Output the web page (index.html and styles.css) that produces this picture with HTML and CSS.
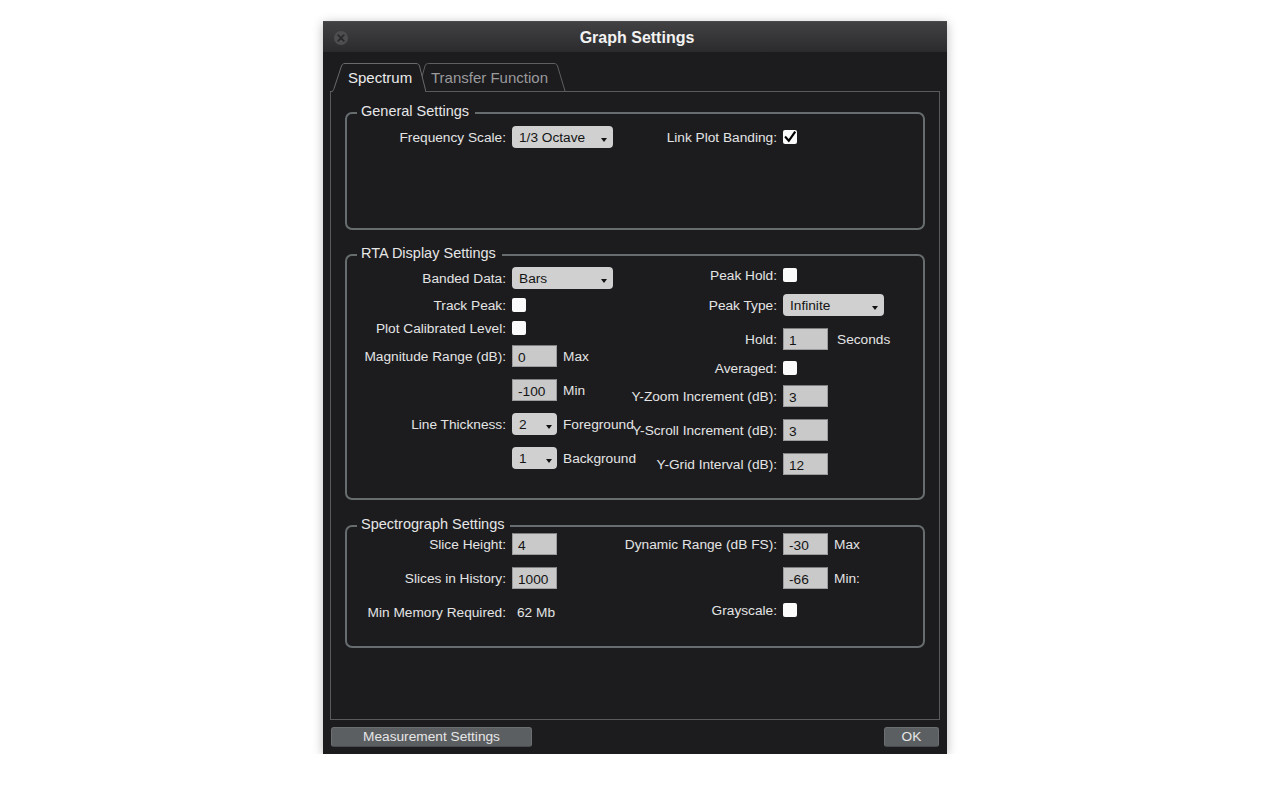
FILE: index.html
```html
<!DOCTYPE html>
<html>
<head>
<meta charset="utf-8">
<title>Graph Settings</title>
<link rel="stylesheet" href="styles.css">
</head>
<body>
<div class="window">
  <div class="titlebar">
    <span class="close"><svg width="16" height="16" viewBox="0 0 16 16"><circle cx="8" cy="8" r="7" fill="#4e4e50"/><path d="M5.2,5.2 L10.8,10.8 M10.8,5.2 L5.2,10.8" stroke="#2a2a2c" stroke-width="1.8" stroke-linecap="round"/></svg></span>
    <span class="title">Graph Settings</span>
  </div>
  <div class="body">
    <div class="tabs">
      <div class="tab tab-active">
        <svg class="tab-shape" viewBox="0 0 96 30" preserveAspectRatio="none"><path d="M0,30 C3,30 3.5,28 4,26.5 L11.5,4 C12,2.5 13,1.5 15,1.5 L86,1.5 C88,1.5 89,2.5 89.5,4 L96,30 Z" fill="#1c1c1f" stroke="none"/><path d="M0,30 C3,30 3.5,28 4,26.5 L11.5,4 C12,2.5 13,1.5 15,1.5 L86,1.5 C88,1.5 89,2.5 89.5,4 L96,30" fill="none" stroke="#6a6a6c" stroke-width="1"/></svg>
        <span class="tab-label">Spectrum</span>
      </div>
      <div class="tab tab-inactive">
        <svg class="tab-shape" viewBox="0 0 148 30" preserveAspectRatio="none"><path d="M0,29 L7,4 C7.5,2.5 8.5,1.5 10.5,1.5 L136,1.5 C138,1.5 139,2.5 139.5,4 L147,29" fill="#1c1c1f" stroke="#5f5f61" stroke-width="1"/></svg>
        <span class="tab-label">Transfer Function</span>
      </div>
    </div>
    <div class="panel">
      <fieldset class="group">
        <legend><span>General Settings</span></legend>
        <div class="cols h-general">
          <div class="col left gen-left">
            <div class="row"><div class="lbl">Frequency Scale:</div><div class="ctl"><div class="select wide"><span>1/3 Octave</span><i class="arrow"></i></div></div></div>
          </div>
          <div class="col right gen-right">
            <div class="row"><div class="lbl">Link Plot Banding:</div><div class="ctl"><span class="check on"><svg width="14" height="14" viewBox="0 0 14 14"><path d="M2.8,7.4 L5.8,10.8 L11.6,2.6" fill="none" stroke="#000" stroke-width="2.2" stroke-linecap="square"/></svg></span></div></div>
          </div>
        </div>
      </fieldset>

      <fieldset class="group gap-rta">
        <legend><span>RTA Display Settings</span></legend>
        <div class="cols h-rta">
          <div class="col left rta-left">
            <div class="row"><div class="lbl">Banded Data:</div><div class="ctl"><div class="select wide"><span>Bars</span><i class="arrow"></i></div></div></div>
            <div class="row"><div class="lbl">Track Peak:</div><div class="ctl"><span class="check"></span></div></div>
            <div class="row"><div class="lbl">Plot Calibrated Level:</div><div class="ctl"><span class="check"></span></div></div>
            <div class="row"><div class="lbl">Magnitude Range (dB):</div><div class="ctl"><span class="field">0</span><span class="suffix">Max</span></div></div>
            <div class="row"><div class="lbl"></div><div class="ctl"><span class="field">-100</span><span class="suffix">Min</span></div></div>
            <div class="row"><div class="lbl">Line Thickness:</div><div class="ctl"><div class="select narrow"><span>2</span><i class="arrow"></i></div><span class="suffix">Foreground</span></div></div>
            <div class="row"><div class="lbl"></div><div class="ctl"><div class="select narrow"><span>1</span><i class="arrow"></i></div><span class="suffix">Background</span></div></div>
          </div>
          <div class="col right rta-right">
            <div class="row"><div class="lbl">Peak Hold:</div><div class="ctl"><span class="check"></span></div></div>
            <div class="row"><div class="lbl">Peak Type:</div><div class="ctl"><div class="select wide"><span>Infinite</span><i class="arrow"></i></div></div></div>
            <div class="row"><div class="lbl">Hold:</div><div class="ctl"><span class="field">1</span><span class="suffix suffix-wide">Seconds</span></div></div>
            <div class="row"><div class="lbl">Averaged:</div><div class="ctl"><span class="check"></span></div></div>
            <div class="row"><div class="lbl">Y-Zoom Increment (dB):</div><div class="ctl"><span class="field">3</span></div></div>
            <div class="row"><div class="lbl">Y-Scroll Increment (dB):</div><div class="ctl"><span class="field">3</span></div></div>
            <div class="row"><div class="lbl">Y-Grid Interval (dB):</div><div class="ctl"><span class="field">12</span></div></div>
          </div>
        </div>
      </fieldset>

      <fieldset class="group gap-spec">
        <legend><span>Spectrograph Settings</span></legend>
        <div class="cols h-spec">
          <div class="col left spec-left">
            <div class="row"><div class="lbl">Slice Height:</div><div class="ctl"><span class="field">4</span></div></div>
            <div class="row"><div class="lbl">Slices in History:</div><div class="ctl"><span class="field">1000</span></div></div>
            <div class="row"><div class="lbl">Min Memory Required:</div><div class="ctl"><span class="value">62 Mb</span></div></div>
          </div>
          <div class="col right spec-right">
            <div class="row"><div class="lbl">Dynamic Range (dB FS):</div><div class="ctl"><span class="field">-30</span><span class="suffix">Max</span></div></div>
            <div class="row"><div class="lbl"></div><div class="ctl"><span class="field">-66</span><span class="suffix">Min:</span></div></div>
            <div class="row"><div class="lbl">Grayscale:</div><div class="ctl"><span class="check"></span></div></div>
          </div>
        </div>
      </fieldset>
    </div>
    <div class="buttons">
      <button class="btn btn-measure">Measurement Settings</button>
      <button class="btn btn-ok">OK</button>
    </div>
  </div>
</div>
</body>
</html>
```

FILE: styles.css
```css
html, body {
  margin: 0;
  padding: 0;
  background: #ffffff;
}

body {
  font-family: "Liberation Sans", Arial, Helvetica, sans-serif;
  font-size: 13.7px;
  color: #e4e4e4;
}

.window {
  width: 624px;
  height: 733px;
  margin: 21px auto 0;
  background: #1c1c1f;
  box-shadow: 0 2px 10px rgba(0, 0, 0, 0.28);
  display: flex;
  flex-direction: column;
}

.titlebar {
  height: 31px;
  flex: none;
  display: flex;
  align-items: center;
  justify-content: center;
  position: relative;
  background: linear-gradient(#414143, #2b2b2d);
  border-top: 1px solid #4a4a4c;
  box-sizing: border-box;
}

.close {
  position: absolute;
  left: 10px;
  top: 8px;
  width: 16px;
  height: 16px;
  display: block;
}

.close svg {
  display: block;
}

.title {
  font-size: 16px;
  font-weight: bold;
  color: #f2f2f2;
  padding-left: 4px;
  padding-top: 2px;
}

.body {
  flex: 1;
  padding: 10px 7px 7px 7px;
  display: flex;
  flex-direction: column;
}

.tabs {
  display: flex;
  height: 30px;
  margin-bottom: -1px;
  flex: none;
}

.tab {
  position: relative;
  height: 30px;
  display: flex;
  align-items: center;
  font-size: 15px;
}

.tab-shape {
  position: absolute;
  left: 0;
  top: 0;
  width: 100%;
  height: 100%;
  display: block;
}

.tab-label {
  position: relative;
  padding-top: 0;
}

.tab-active {
  width: 96px;
  padding-left: 18px;
  box-sizing: border-box;
  z-index: 2;
  color: #ebebeb;
}

.tab-inactive {
  width: 148px;
  margin-left: -8px;
  padding-left: 13px;
  box-sizing: border-box;
  z-index: 1;
  color: #9a9a9c;
}

.panel {
  width: 610px;
  height: 629px;
  box-sizing: border-box;
  border: 1px solid #5a5a5c;
  padding: 14px 14px 0 14px;
  flex: none;
}

.group {
  margin: 0;
  padding: 0;
  min-width: 0;
  width: 580px;
  box-sizing: border-box;
  border: 2px solid #676d6e;
  border-radius: 7px;
}

.group legend {
  margin-left: 10px;
  padding: 0 6px 0 4px;
  font-size: 14.5px;
  line-height: 14px;
  color: #e6e6e6;
}

.group legend span {
  position: relative;
  top: -2px;
}

.gap-rta {
  margin-top: 18px;
}

.gap-spec {
  margin-top: 19px;
}

.cols {
  display: flex;
}

.h-general { height: 108px; }
.h-rta { height: 236px; }
.h-spec { height: 113px; }

.col {
  display: grid;
  align-content: start;
  align-items: start;
}

.left {
  width: 280px;
}

.right {
  width: 290px;
}

.row {
  display: flex;
  align-items: center;
  height: 22px;
}

.lbl {
  display: flex;
  justify-content: flex-end;
  white-space: nowrap;
  margin-right: 6px;
  flex: none;
}

.left .lbl { width: 159px; }
.right .lbl { width: 150px; }

.ctl {
  display: flex;
  align-items: center;
  white-space: nowrap;
}

/* vertical rhythm of each column */
.gen-left { padding-top: 6px; grid-template-rows: 22px; }
.gen-right { padding-top: 6px; grid-template-rows: 22px; }
.rta-left { padding-top: 5px; grid-template-rows: 27px 23px 28px 34px 34px 34px 22px; }
.rta-right { padding-top: 2px; grid-template-rows: 30px 34px 29px 28px 34px 34px 22px; }
.spec-left { padding-top: 0; grid-template-rows: 34px 34px 22px; }
.spec-right { padding-top: 0; grid-template-rows: 34px 32px 22px; }

.select {
  height: 22px;
  box-sizing: border-box;
  background: #d0d0d1;
  border-radius: 4px;
  color: #141414;
  display: flex;
  align-items: center;
  justify-content: space-between;
  padding-left: 7px;
  padding-top: 1px;
}

.select.wide { width: 101px; padding-right: 6px; }
.select.narrow { width: 45px; padding-right: 5px; }

.arrow {
  display: block;
  width: 0;
  height: 0;
  border-left: 3.5px solid transparent;
  border-right: 3.5px solid transparent;
  border-top: 4px solid #111;
  margin-top: 5px;
}

.field {
  width: 45px;
  height: 22px;
  box-sizing: border-box;
  background: #c9c9ca;
  border: 1px solid #9c9c9e;
  border-top-color: #7e7e80;
  color: #141414;
  padding-left: 5px;
  padding-top: 4px;
  display: block;
  line-height: 16px;
}

.suffix {
  margin-left: 6px;
}

.suffix-wide {
  margin-left: 9px;
}

.value {
  padding-left: 5px;
}

.check {
  width: 14px;
  height: 14px;
  background: #fbfbfb;
  border-radius: 2px;
  display: block;
}

.check svg {
  display: block;
}

.buttons {
  display: flex;
  justify-content: space-between;
  margin-top: 7px;
  height: 20px;
  padding-left: 1px;
  padding-right: 1px;
}

.btn {
  height: 20px;
  box-sizing: border-box;
  background: #5c5f62;
  border: 1px solid #6c6f72;
  border-bottom-color: #4a4c4f;
  border-radius: 3px;
  color: #e6e6e6;
  font-family: "Liberation Sans", Arial, Helvetica, sans-serif;
  font-size: 13.7px;
  padding: 0;
  line-height: 18px;
}

.btn-measure { width: 201px; }
.btn-ok { width: 55px; }
```
